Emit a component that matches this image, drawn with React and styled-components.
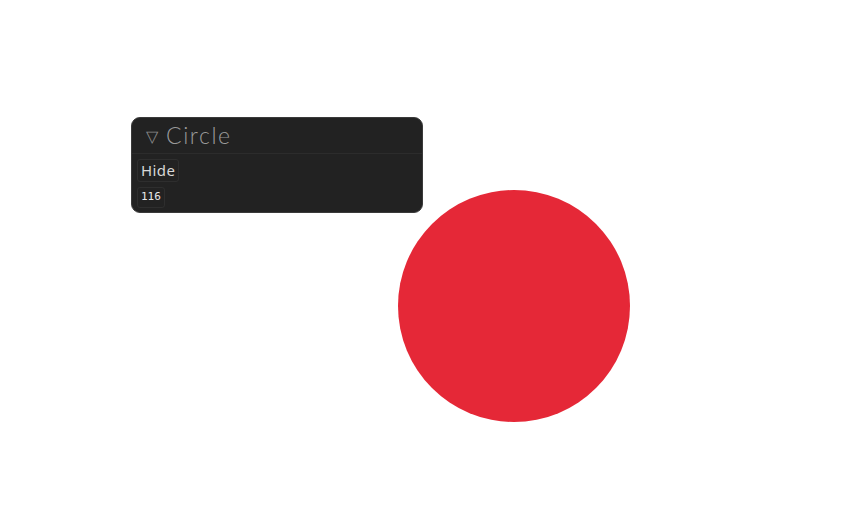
import React from "react";
import styled, { createGlobalStyle } from "styled-components";

const GlobalStyle = createGlobalStyle`
  html, body {
    margin: 0;
    padding: 0;
    background: #ffffff;
  }
`;

function App() {
  const circle = { x: 514, y: 306, r: 116 };
  return (
    <Stage>
      <GlobalStyle />
      <Dot
        style={{
          left: circle.x - circle.r,
          top: circle.y - circle.r,
          width: circle.r * 2,
          height: circle.r * 2,
        }}
      />
      <Panel>
        <Header>
          <Caret>▽</Caret>
          <Title>Circle</Title>
        </Header>
        <Body>
          <Button>Hide</Button>
          <Value>{circle.r}</Value>
        </Body>
      </Panel>
    </Stage>
  );
}

const Stage = styled.div`
  position: relative;
  width: 851px;
  height: 525px;
  overflow: hidden;
  background: #fff;
`;

const Dot = styled.div`
  position: absolute;
  border-radius: 50%;
  background: #e52837;
`;

const Panel = styled.div`
  position: absolute;
  left: 131px;
  top: 117px;
  width: 290px;
  height: 94px;
  background: #222222;
  border: 1px solid #3a3a3a;
  border-radius: 9px;
  overflow: hidden;
  font-family: "Noto Sans", "Liberation Sans", sans-serif;
`;

const Header = styled.div`
  display: flex;
  align-items: center;
  gap: 8px;
  height: 35px;
  padding-left: 14px;
  border-bottom: 1px solid #2c2c2c;
`;

const Caret = styled.span`
  color: #8a8a8a;
  font-size: 16px;
  line-height: 1;
  padding-top: 1px;
`;

const Title = styled.span`
  color: #9a9a9a;
  font-family: Lato, "Noto Sans", sans-serif;
  font-weight: 300;
  font-size: 23px;
  letter-spacing: 1.6px;
  line-height: 1;
`;

const Body = styled.div`
  display: flex;
  flex-direction: column;
  align-items: flex-start;
  gap: 5px;
  padding: 5px 0 0 5px;
`;

const Button = styled.div`
  border: 1px solid #2e2e2e;
  border-radius: 3px;
  padding: 1px 3px 2px;
  color: #d8d8d8;
  font-size: 15px;
  line-height: 18px;
  letter-spacing: 0.4px;
`;

const Value = styled.div`
  border: 1px solid #2e2e2e;
  border-radius: 3px;
  padding: 2px 3px 3px;
  color: #e8e8e8;
  font-family: "DejaVu Sans Mono", "Liberation Mono", monospace;
  font-size: 11px;
  line-height: 14px;
`;

export default App;
